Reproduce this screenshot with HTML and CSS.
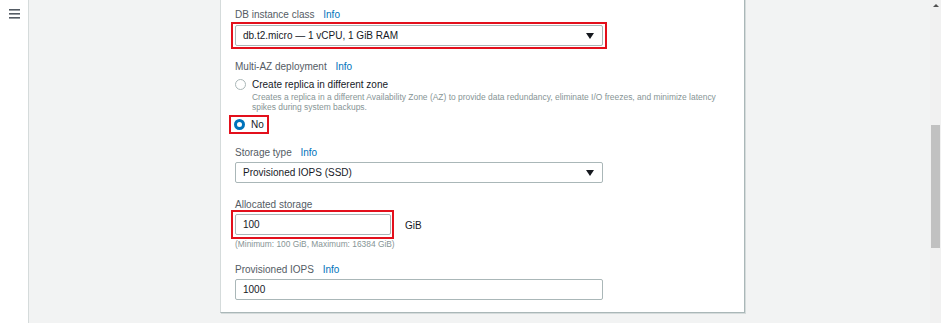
FILE: index.html
```html
<!DOCTYPE html>
<html lang="en">
<head>
<meta charset="utf-8">
<title>DB instance settings</title>
<link rel="stylesheet" href="styles.css">
</head>
<body>
<div class="page">
  <aside class="sidebar">
    <svg class="menu-icon" width="11" height="10" viewBox="0 0 11 10" aria-hidden="true">
      <rect x="0" y="0" width="11" height="1.6" fill="#545b64"/>
      <rect x="0" y="4" width="11" height="1.6" fill="#545b64"/>
      <rect x="0" y="8" width="11" height="1.6" fill="#545b64"/>
    </svg>
  </aside>
  <main class="main">
    <section class="card">
      <div class="field">
        <div class="label">DB instance class <a class="info">Info</a></div>
        <div class="mark mark-select">
          <div class="select">
            <span>db.t2.micro — 1 vCPU, 1 GiB RAM</span>
            <span class="caret"></span>
          </div>
        </div>
      </div>

      <div class="field az">
        <div class="label">Multi-AZ deployment <a class="info">Info</a></div>
        <div class="radio-row">
          <span class="radio"></span>
          <span class="radio-label">Create replica in different zone</span>
        </div>
        <div class="radio-desc">Creates a replica in a different Availability Zone (AZ) to provide data redundancy, eliminate I/O freezes, and minimize latency spikes during system backups.</div>
        <div class="radio-row selected-box">
          <span class="radio checked"></span>
          <span class="radio-label">No</span>
        </div>
      </div>

      <div class="field storage">
        <div class="label">Storage type <a class="info">Info</a></div>
        <div class="select plain">
          <span>Provisioned IOPS (SSD)</span>
          <span class="caret"></span>
        </div>
      </div>

      <div class="field alloc">
        <div class="label">Allocated storage</div>
        <div class="input-row">
          <div class="mark mark-input">
            <div class="input short">100</div>
          </div>
          <span class="unit">GiB</span>
        </div>
        <div class="hint">(Minimum: 100 GiB, Maximum: 16384 GiB)</div>
      </div>

      <div class="field iops">
        <div class="label">Provisioned IOPS <a class="info">Info</a></div>
        <div class="input plain">1000</div>
      </div>
    </section>
  </main>
  <div class="scrollbar">
    <span class="scroll-up"></span>
    <span class="thumb"></span>
  </div>
</div>
</body>
</html>
```
FILE: styles.css
```css
* { box-sizing: border-box; }
html, body { margin: 0; padding: 0; }
body {
  font-family: "Liberation Sans", Arial, sans-serif;
  color: #16191f;
  background: #f2f3f3;
  overflow: hidden;
}
.page {
  display: flex;
  width: 941px;
  height: 323px;
  overflow: hidden;
}
.sidebar {
  width: 29px;
  flex: none;
  background: #ffffff;
  border-right: 1px solid #d5dbdb;
  padding: 9px 0 0 9px;
}
.menu-icon { display: block; }
.main {
  flex: 1;
  padding-left: 191px;
  overflow: hidden;
}
.card {
  width: 525px;
  margin-top: -12px;
  background: #ffffff;
  border: 1px solid #d5dbdb;
  border-right-color: #aab7b8;
  border-bottom-color: #aab7b8;
  box-shadow: 1px 1px 0 #d5dbdb;
  padding: 19px 14px 12px 14px;
}
.label {
  font-size: 10px;
  line-height: 14px;
  color: #545b64;
  white-space: nowrap;
}
.info {
  color: #0073bb;
  margin-left: 6px;
  text-decoration: none;
}
.select, .input {
  width: 368px;
  height: 21px;
  border: 1px solid #aab7b8;
  border-radius: 2px;
  padding: 0 8px 0 7px;
  display: flex;
  align-items: center;
  justify-content: space-between;
  font-size: 10px;
  color: #16191f;
  background: #fff;
}
.plain { margin-top: 2px; }
.caret {
  width: 0; height: 0;
  border-left: 4px solid transparent;
  border-right: 4px solid transparent;
  border-top: 6px solid #16191f;
}
.mark {
  border: 2px solid #e3101c;
  width: max-content;
}
.mark-select {
  margin-left: -4px;
  padding: 1px 2px;
}
.mark-input {
  margin-left: -4px;
  margin-top: -2px;
  padding: 2px 1px 2px 2px;
}
.az { margin-top: 11px; }
.radio-row {
  display: flex;
  align-items: center;
  margin-top: 3px;
  height: 14px;
}
.radio {
  width: 11px; height: 11px;
  border: 1px solid #aab7b8;
  border-radius: 50%;
  flex: none;
  margin-right: 6px;
  background: #fff;
}
.radio.checked {
  border: 3.5px solid #0073bb;
}
.radio-label {
  font-size: 10px;
  color: #16191f;
}
.radio-desc {
  margin: 1px 0 0 17px;
  font-size: 8.45px;
  line-height: 10px;
  color: #879596;
  width: 485px;
}
.selected-box {
  width: 40px;
  height: 19px;
  border: 2px solid #e3101c;
  margin-left: -6px;
  padding-left: 3px;
}
.storage { margin-top: 12px; }
.alloc { margin-top: 15px; }
.input-row {
  display: flex;
  align-items: center;
}
.input { justify-content: flex-start; }
.input.short { width: 156px; }
.unit {
  font-size: 10px;
  margin-left: 11px;
  color: #16191f;
}
.hint {
  font-size: 8.4px;
  line-height: 10px;
  color: #879596;
}
.iops { margin-top: 14px; }
.scrollbar {
  width: 11px;
  flex: none;
  background: #f1f1f1;
  display: flex;
  flex-direction: column;
  align-items: center;
  padding-top: 4px;
}
.scroll-up {
  width: 0; height: 0;
  border-left: 3px solid transparent;
  border-right: 3px solid transparent;
  border-bottom: 3px solid #505050;
}
.thumb {
  margin-top: 118px;
  width: 9px;
  height: 123px;
  background: #c1c1c1;
}
```
